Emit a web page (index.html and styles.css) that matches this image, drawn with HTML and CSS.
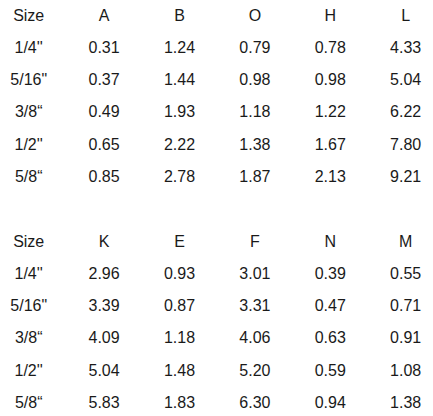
FILE: index.html
```html
<!DOCTYPE html>
<html>
<head>
<meta charset="utf-8">
<link rel="stylesheet" href="styles.css">
</head>
<body>
<div class="sheet">
  <div class="grid">
    <div>Size</div><div>A</div><div>B</div><div>O</div><div>H</div><div>L</div>
    <div>1/4''</div><div>0.31</div><div>1.24</div><div>0.79</div><div>0.78</div><div>4.33</div>
    <div>5/16"</div><div>0.37</div><div>1.44</div><div>0.98</div><div>0.98</div><div>5.04</div>
    <div>3/8“</div><div>0.49</div><div>1.93</div><div>1.18</div><div>1.22</div><div>6.22</div>
    <div>1/2''</div><div>0.65</div><div>2.22</div><div>1.38</div><div>1.67</div><div>7.80</div>
    <div>5/8“</div><div>0.85</div><div>2.78</div><div>1.87</div><div>2.13</div><div>9.21</div>
  </div>
  <div class="grid second">
    <div>Size</div><div>K</div><div>E</div><div>F</div><div>N</div><div>M</div>
    <div>1/4''</div><div>2.96</div><div>0.93</div><div>3.01</div><div>0.39</div><div>0.55</div>
    <div>5/16"</div><div>3.39</div><div>0.87</div><div>3.31</div><div>0.47</div><div>0.71</div>
    <div>3/8“</div><div>4.09</div><div>1.18</div><div>4.06</div><div>0.63</div><div>0.91</div>
    <div>1/2''</div><div>5.04</div><div>1.48</div><div>5.20</div><div>0.59</div><div>1.08</div>
    <div>5/8“</div><div>5.83</div><div>1.83</div><div>6.30</div><div>0.94</div><div>1.38</div>
  </div>
</div>
</body>
</html>
```

FILE: styles.css
```css
html, body {
  margin: 0;
  padding: 0;
  background: #ffffff;
}
body {
  font-family: "Liberation Sans", Arial, sans-serif;
  font-size: 16px;
  color: #1a1a1a;
  overflow: hidden;
}
.sheet {
  margin-top: -0.5px;
  margin-left: -9px;
}
.grid {
  display: grid;
  grid-template-columns: repeat(6, 75.4px);
  grid-auto-rows: 32.3px;
  line-height: 32.3px;
  text-align: center;
}
.second {
  margin-top: 32.3px;
}
```
